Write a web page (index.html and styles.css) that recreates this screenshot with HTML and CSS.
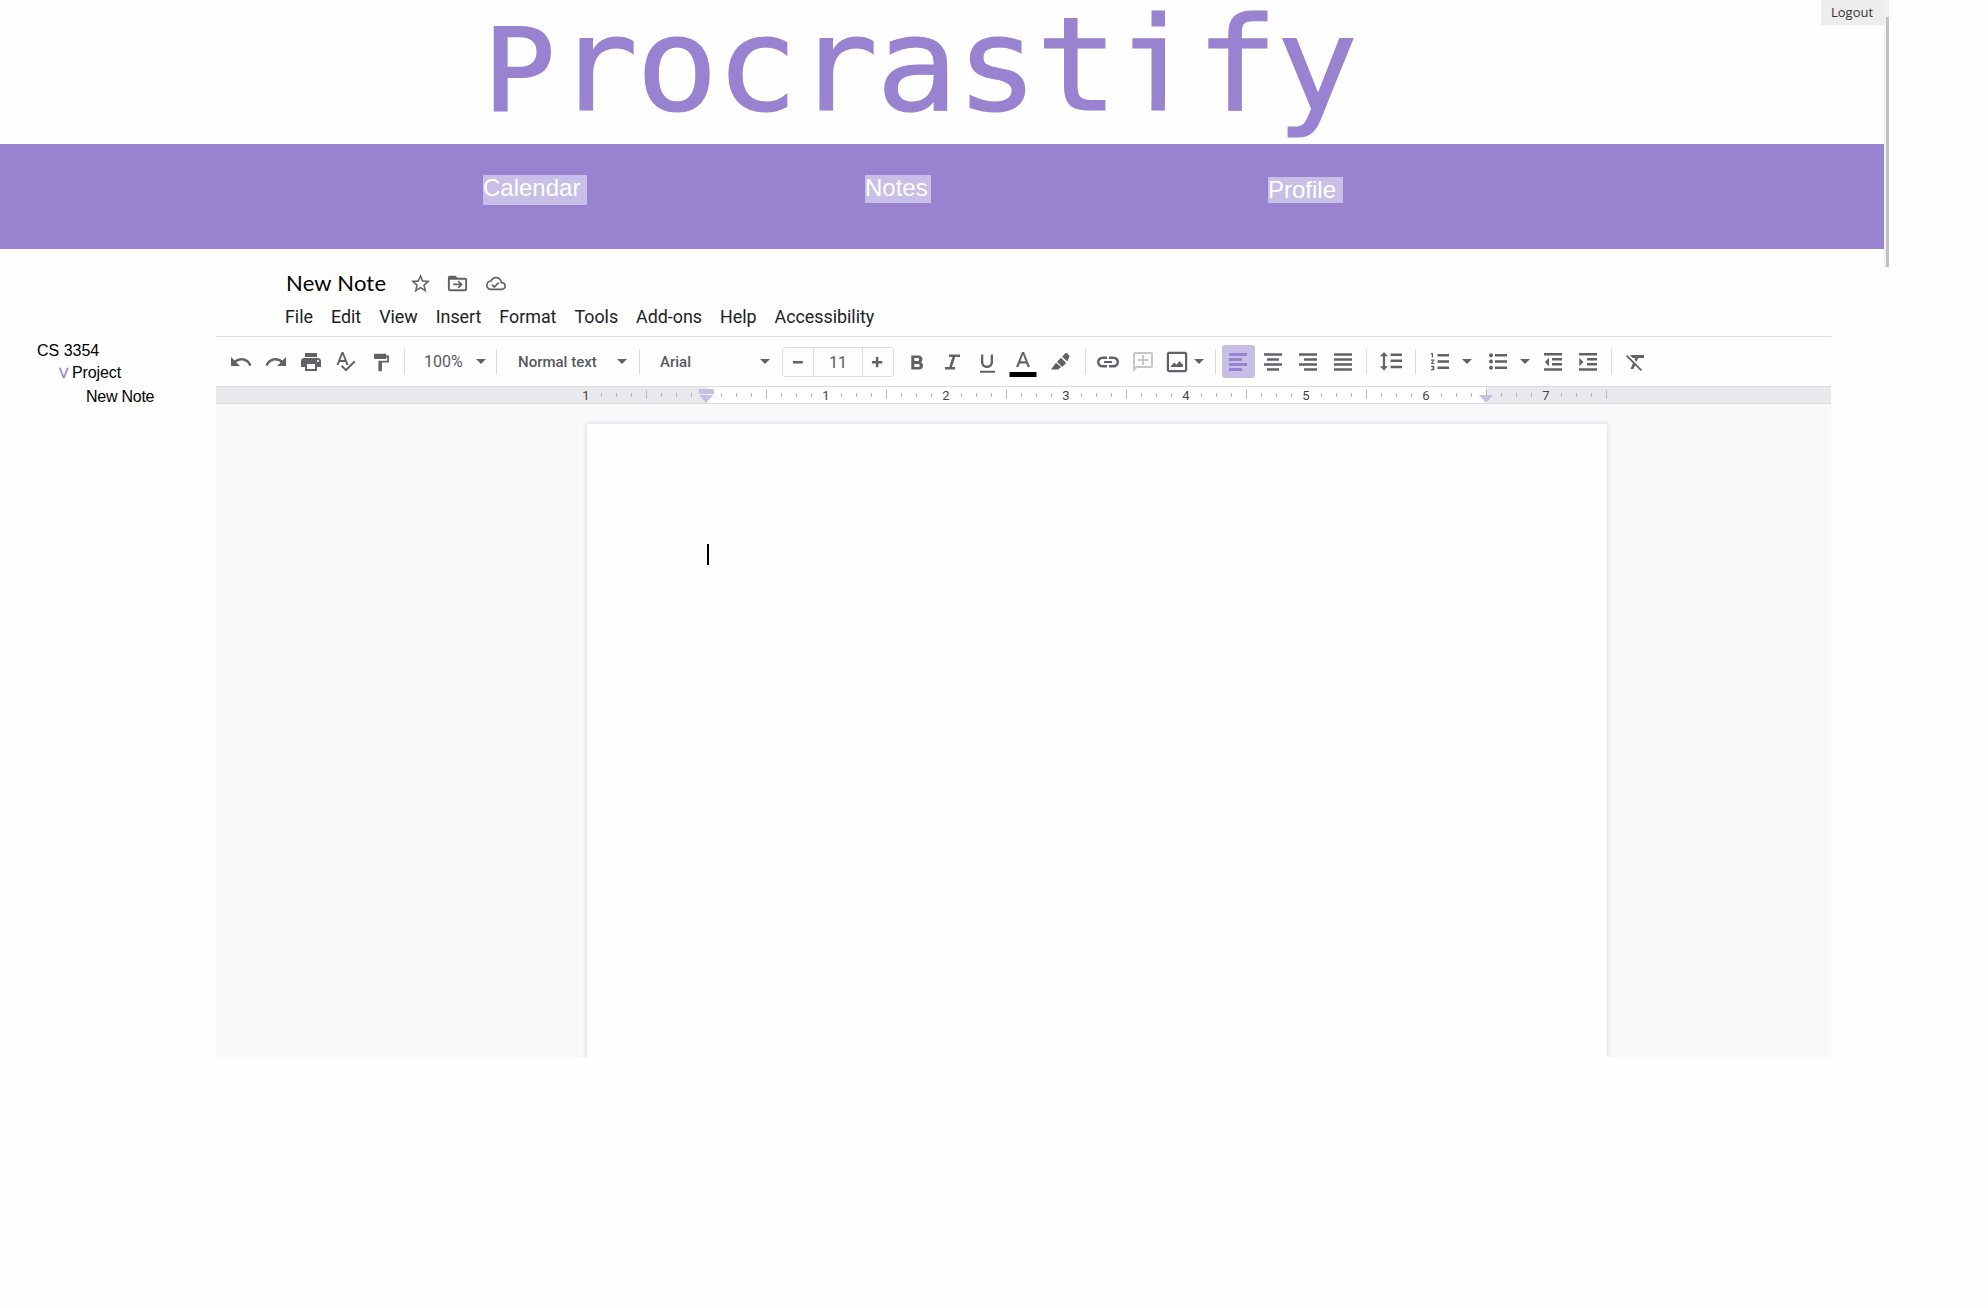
FILE: index.html
```html
<!DOCTYPE html>
<html lang="en">
<head>
<meta charset="utf-8">
<title>Procrastify</title>
<link rel="stylesheet" href="styles.css">
</head>
<body>
<header class="site">
  <h1 class="brand"><span class="cap">P</span>rocrast<span class="stem">i</span>fy</h1>
  <nav class="nav">
    <a class="cal">Calendar</a>
    <a class="notes">Notes</a>
    <a class="profile">Profile</a>
  </nav>
  <a class="logout">Logout</a>
  <div class="scroll"><div class="thumb"></div></div>
</header>
<main class="main">
  <aside class="tree">
    <div class="course">CS 3354</div>
    <div class="folder"><span class="chev">V</span>Project</div>
    <div class="leaf">New Note</div>
  </aside>
  <section class="editor">
    <div class="titlebar">
      <span class="doc">New Note</span>
      <svg class="ti star" viewBox="0 0 24 24"><path d="M22 9.24l-7.19-.62L12 2 9.19 8.63 2 9.24l5.46 4.73L5.82 21 12 17.27 18.18 21l-1.63-7.03L22 9.24zM12 15.4l-3.76 2.27 1-4.28-3.32-2.88 4.38-.38L12 6.1l1.71 4.04 4.38.38-3.32 2.88 1 4.28L12 15.4z"/></svg>
      <svg class="ti fold" viewBox="0 0 24 24"><path d="M20 6h-8l-2-2H4c-1.1 0-2 .9-2 2v12c0 1.1.9 2 2 2h16c1.1 0 2-.9 2-2V8c0-1.100-.9-2-2-2zm0 12H4V8h16v10zm-7.900-2.100l1.300 1.300L17.500 13l-4.100-4.200-1.300 1.300 2 2H7.500v1.800h6.600z"/></svg>
      <svg class="ti cloud" viewBox="0 0 24 24"><path d="M19.350 10.040C18.670 6.590 15.640 4 12 4 9.110 4 6.610 5.640 5.360 8.040 2.340 8.360 0 10.910 0 14c0 3.310 2.690 6 6 6h13c2.760 0 5-2.240 5-5 0-2.640-2.050-4.780-4.650-4.960zM19 18H6c-2.210 0-4-1.790-4-4s1.790-4 4-4h.71C7.370 7.690 9.480 6 12 6c3.040 0 5.500 2.460 5.500 5.500v.5H19c1.660 0 3 1.340 3 3s-1.340 3-3 3zm-9-3.180l-2.090-2.090L6.500 14.140 10 17.640l6.010-6.010-1.410-1.410z"/></svg>
    </div>
    <div class="menus"><span>File</span><span>Edit</span><span>View</span><span>Insert</span><span>Format</span><span>Tools</span><span>Add-ons</span><span>Help</span><span>Accessibility</span></div>
    <div class="toolbar">
      <div class="group g-history">
        <svg class="ic" viewBox="0 0 24 24"><path d="M12.500 8c-2.650 0-5.050.99-6.900 2.600L2 7v9h9l-3.620-3.620c1.390-1.160 3.160-1.880 5.120-1.880 3.540 0 6.550 2.310 7.600 5.500l2.370-.78C21.080 11.030 17.150 8 12.500 8z"/></svg>
        <svg class="ic" viewBox="0 0 24 24"><path d="M18.400 10.600C16.550 8.990 14.150 8 11.500 8c-4.650 0-8.580 3.030-9.960 7.220L3.900 16c1.050-3.190 4.050-5.500 7.600-5.500 1.950 0 3.730.72 5.120 1.880L13 16h9V7l-3.600 3.600z"/></svg>
        <svg class="ic" viewBox="0 0 24 24"><path d="M19 8H5c-1.660 0-3 1.340-3 3v6h4v4h12v-4h4v-6c0-1.660-1.340-3-3-3zm-3 11H8v-5h8v5zm3-7c-.55 0-1-.45-1-1s.45-1 1-1 1 .45 1 1-.45 1-1 1zm-1-9H6v4h12V3z"/></svg>
        <svg class="ic" viewBox="0 0 24 24"><path d="M12.450 16h2.090L9.430 3H7.570L2.460 16h2.090l1.120-3h5.640l1.140 3zm-6.020-5L8.500 5.480 10.570 11H6.430zm13.660.59l-8.090 8.090L8.330 16 6.920 17.410 12 22.500l9.500-9.500-1.410-1.410z" transform="translate(0 -1)"/></svg>
        <svg class="ic" viewBox="0 0 24 24"><path d="M18 4V3c0-.55-.45-1-1-1H5c-.55 0-1 .45-1 1v4c0 .55.45 1 1 1h12c.55 0 1-.45 1-1V6h1v4H9v11c0 .55.45 1 1 1h2c.55 0 1-.45 1-1v-9h8V4h-3z" transform="translate(1.500 2) scale(.88)"/></svg>
      </div>
      <i class="sep"></i>
      <div class="group g-zoom"><span class="lbl">100%</span><b class="caret"></b></div>
      <i class="sep"></i>
      <div class="group g-style"><span class="lbl med">Normal text</span><b class="caret"></b></div>
      <i class="sep"></i>
      <div class="group g-font"><span class="lbl med">Arial</span><b class="caret"></b></div>
      <div class="size"><svg viewBox="0 0 30 28"><path d="M10 13h10v2.500H10z"/></svg><span>11</span><svg viewBox="0 0 30 28"><path d="M9 13h4V9h2.500v4h4v2.400h-4v4H13v-4H9z"/></svg></div>
      <div class="group g-format">
        <svg class="ic" viewBox="0 0 24 24"><path d="M15.600 11.790c.97-.67 1.650-1.770 1.650-2.790 0-2.260-1.750-4-4-4H6v14h8.040c2.090 0 3.710-1.700 3.710-3.790 0-1.520-.86-2.820-2.150-3.420zM9 7.500h3.500c.83 0 1.500.67 1.500 1.500s-.67 1.500-1.500 1.500H9v-3zm4 9H9v-3h4c.83 0 1.500.67 1.500 1.500s-.67 1.500-1.500 1.500z" transform="translate(.3 .5)"/></svg>
        <svg class="ic" viewBox="0 0 24 24"><path d="M9 4.500v2.600h3.400L9.200 16.900H5v2.600h10v-2.600h-3L15.200 7.100H20V4.500z"/></svg>
        <svg class="ic" viewBox="0 0 24 24"><path d="M12 18c3.310 0 6-2.500 6-5.810V4.500h-2.300v7.800c0 1.800-1.600 3.400-3.700 3.400s-3.700-1.600-3.700-3.400V4.500H6v7.690C6 15.500 8.690 18 12 18zm-7 2.700V22.700h15v-2z"/></svg>
        <svg class="ic color" viewBox="0 0 28 28"><path d="M13 4L7 19h2.400l1.300-3.600h6.600l1.300 3.600H21L15 4zm-1.500 9.300L14 6.500l2.500 6.800z"/><path d="M.5 24h27v5H.5z" fill="#000"/></svg>
        <svg class="ic mark" viewBox="0 0 24 24"><path d="M2 19.500l5-6.700 5.200 4.200L9 19.500zM8 11.800l4-4 5.200 5.200-4 4zM13.200 6.700L16.200 3.300q.9-.7 1.800 0l2.200 2.200q.8.900 0 1.800l-2 4.200z"/></svg>
      </div>
      <i class="sep"></i>
      <div class="group g-insert">
        <svg class="ic" viewBox="0 0 24 24"><path d="M3.400 12c0-1.710 1.390-3.100 3.100-3.100H11V6.500H6.500a5.500 5.500 0 000 11H11v-2.400H6.500c-1.710 0-3.100-1.390-3.100-3.100zM8 13.100h8v-2.200H8v2.200zm9.500-6.600H13v2.400h4.500c1.710 0 3.100 1.390 3.100 3.100s-1.390 3.100-3.100 3.100H13v2.400h4.500a5.500 5.500 0 000-11z"/></svg>
        <svg class="ic pale" viewBox="0 0 24 24"><path d="M20 2H4c-1.100 0-2 .9-2 2v18l4-4h14c1.100 0 2-.9 2-2V4c0-1.100-.9-2-2-2zm0 14H5.200L4 17.200V4h16zM11 15h2v-4h4V9h-4V5h-2v4H7v2h4z"/></svg>
        <svg class="ic img" viewBox="0 0 24 24"><path d="M20 1.800H4c-1.200 0-2.200 1-2.200 2.200v16c0 1.200 1 2.200 2.200 2.200h16c1.200 0 2.200-1 2.200-2.200V4c0-1.200-1-2.200-2.200-2.200zM20 20H4V4h16zM6 17h12v-2l-3.500-4-3 3.700L9.300 12.500 6 16z"/></svg>
        <b class="caret"></b>
      </div>
      <i class="sep"></i>
      <div class="group g-align">
        <span class="on"><svg class="ic" viewBox="0 0 24 24"><path d="M3 3h18v3H3zm0 5h13v3H3zm0 5h18v3H3zm0 5h13v3H3z"/></svg></span>
        <svg class="ic" viewBox="0 0 24 24"><path d="M3 3.200h18v2.600H3zm3 5h12v2.600H6zm-3 5h18v2.600H3zm3 5h12v2.600H6z"/></svg>
        <svg class="ic" viewBox="0 0 24 24"><path d="M3 3.200h18v2.600H3zm5 5h13v2.600H8zm-5 5h18v2.600H3zm5 5h13v2.600H8z"/></svg>
        <svg class="ic" viewBox="0 0 24 24"><path d="M3 3.200h18v2.600H3zm0 5h18v2.600H3zm0 5h18v2.600H3zm0 5h18v2.600H3z"/></svg>
      </div>
      <i class="sep"></i>
      <div class="group g-line"><svg class="ic" viewBox="0 0 24 24"><path d="M5 2L.9 6.300H3.900v10H.9L5 20.500l4-4.200H6.100v-10H9zM11.500 3.500H23V6H11.500zm0 6H23V12H11.500zm0 6.300H23v2.500H11.500z"/></svg></div>
      <i class="sep"></i>
      <div class="group g-list">
        <svg class="ic" viewBox="0 0 24 24"><path d="M3 17h2v.5H4v1h1v.5H3v1.200h3.300v-4.500H3zm.8-9.500H5V3H3v1.200h.8zM3 10.700h1.800L3 13v1.100h3.300v-1.200H4.500l1.800-2.300V9.500H3zM9.500 4H21v2.600H9.500zm0 6.300H21v2.500H9.500zm0 6.200H21V19H9.500z"/></svg>
        <b class="caret"></b>
        <svg class="ic" viewBox="0 0 24 24"><circle cx="5" cy="5.300" r="2"/><circle cx="5" cy="11.500" r="2"/><circle cx="5" cy="17.800" r="2"/><path d="M9 4h12v2.600H9zm0 6.300h12v2.500H9zm0 6.200h12V19H9z"/></svg>
        <b class="caret"></b>
        <svg class="ic" viewBox="0 0 24 24"><path d="M3 3h18v2.500H3zm8 5h10v2.500H11zm0 5h10v2.500H11zm-8 5.200h18v2.500H3zM3.800 12L8 7.800v8.400z"/></svg>
        <svg class="ic" viewBox="0 0 24 24"><path d="M3 3h18v2.500H3zm8 5h10v2.500H11zm0 5h10v2.500H11zm-8 5.200h18v2.500H3zM3.300 7.800L7.500 12l-4.200 4.200z"/></svg>
      </div>
      <i class="sep"></i>
      <div class="group g-clear"><svg class="ic" viewBox="0 0 24 24"><path d="M3.270 5L2 6.270l6.970 6.970L6.500 19h3l1.570-3.660L16.730 21 18 19.730 3.550 5.270 3.270 5zM6 5v.18L8.820 8h2.400l-.72 1.680 2.100 2.100L14.210 8H20V5H6z"/></svg></div>
    </div>
    <svg class="ruler" width="1615" height="18" viewBox="216 386 1615 18">
      <defs><pattern id="ticks" x="586" y="386" width="120" height="18" patternUnits="userSpaceOnUse">
        <path d="M15 7h1v4h-1zM30 7h1v4h-1zM45 7h1v4h-1zM60 4h1v9h-1zM75 7h1v4h-1zM90 7h1v4h-1zM105 7h1v4h-1z" fill="#b6b8be"/>
      </pattern></defs>
      <rect x="216" y="386" width="1615" height="18" fill="#e8e9ed"/>
      <rect x="707" y="386" width="779" height="18" fill="#fff"/>
      <rect x="586" y="386" width="1021" height="18" fill="url(#ticks)"/>
      <path d="M216 386h1615v1H216zM216 403h1615v1H216z" fill="#dadce0"/>
      <path d="M699 389h15v5h-15zM699 395h14l-7 8zM1479 395h14l-7 8z" fill="#c8bfe7"/>
      <g class="nums"><text x="586" y="400">1</text><text x="826" y="400">1</text><text x="946" y="400">2</text><text x="1066" y="400">3</text><text x="1186" y="400">4</text><text x="1306" y="400">5</text><text x="1426" y="400">6</text><text x="1546" y="400">7</text></g>
    </svg>
    <div class="canvas"><div class="page"><div class="cursor"></div></div></div>
  </section>
</main>
</body>
</html>
```
FILE: styles.css
```css
* { box-sizing: border-box; }
body { margin: 0; background: #fefefe; font-family: "Liberation Sans", Arial, sans-serif; color: #000; }
.site { position: relative; height: 249px; width: 1889px; }
.brand { margin: 0 0 0 476px; width: 900px; height: 144px; font: 400 130px/130px "DejaVu Sans Mono", monospace; letter-spacing: -2.070px; color: #9982cf; white-space: nowrap; -webkit-text-stroke: 1.200px #9982cf; transform: scaleX(1.05); transform-origin: 0 0; }
.brand .cap { display: inline-block; width: 76.200px; padding-left: 7px; font-size: 114px; line-height: 1; letter-spacing: 0; -webkit-text-stroke: 2px #9982cf; }
/* trims the foot serif so only the stem reaches the baseline */
.brand .stem { display: inline-block; clip-path: polygon(0 -10px, 100% -10px, 100% 77%, 46.500px 77%, 46.500px 100%, 33.700px 100%, 33.700px 77%, 0 77%); }
.nav { display: flex; align-items: flex-start; height: 105px; width: 1884px; padding: 31px 0 0 483px; background: #9982cf; color: #fff; font-size: 24px; line-height: 26px; }
.nav a { background: #c8bfe7; }
.cal { width: 104px; height: 30px; }
.notes { width: 66px; height: 28px; margin-left: 278px; }
.profile { width: 75px; height: 26px; margin: 2px 0 0 337px; }
.logout { position: absolute; left: 1821px; top: 0; width: 63px; height: 25px; padding-left: 10px; background: #ededed; color: #333; font: 13px/25px "Open Sans", sans-serif; }
.scroll { position: absolute; left: 1884px; top: 0; width: 5px; height: 267px; padding: 17px 0 0 2px; background: #f1f1f1; }
.thumb { height: 250px; background: #c1c1c1; }
.main { display: flex; }
.tree { width: 216px; padding: 91px 0 0 37px; font-size: 16px; line-height: 22px; }
.folder { padding-left: 22px; letter-spacing: -.1px; }
.chev { display: inline-block; width: 13px; font-size: 14px; color: #9982cf; -webkit-text-stroke: .4px #9982cf; }
.leaf { padding-left: 49px; margin-top: 2px; letter-spacing: -.25px; }
.editor { width: 1615px; }
.titlebar { display: flex; height: 53px; padding: 19px 0 0 70px; }
.doc { width: 123px; font: 22px/30px Lato, sans-serif; letter-spacing: .2px; white-space: nowrap; }
.ti { width: 23px; height: 23px; margin-top: 4px; fill: #5f6368; }
.star { margin-left: 0; }
.fold { margin-left: 14px; }
.cloud { width: 20px; margin-left: 17px; }
.menus { display: flex; gap: 18px; height: 35px; padding-left: 69px; border-bottom: 1px solid #dadce0; font: 17.900px/30px Roboto, sans-serif; letter-spacing: -.03px; color: #202124; }
.toolbar { display: flex; align-items: center; height: 49px; padding-left: 7px; }
.group { display: flex; align-items: center; flex: none; }
.ic { width: 24px; height: 24px; margin: 0 5.500px; flex: none; fill: #5f6368; }
.sep { width: 1px; height: 25px; background: #dadce0; flex: none; }
.caret { border: 5px solid transparent; border-top-color: #5f6368; border-bottom: 0; }
.lbl { font: 16px/20px Roboto, sans-serif; color: #555a5f; white-space: nowrap; }
.med { font-weight: 500; font-size: 15px; }
.g-history { width: 181px; }
.g-zoom { width: 91px; padding-left: 19px; }
.g-zoom .lbl { width: 52px; }
.g-style { width: 142px; padding-left: 21px; }
.g-style .lbl { width: 99px; }
.g-font { width: 142px; padding-left: 20px; }
.g-font .lbl { width: 100px; }
.size { display: flex; width: 112px; height: 30px; border: 1px solid #dadce0; border-radius: 3px; flex: none; }
.size svg { width: 30px; height: 28px; fill: #5f6368; }
.size span { width: 51px; border: 1px solid #dadce0; border-width: 0 1px; text-align: center; font: 16px/29px Roboto, sans-serif; color: #555a5f; }
.g-format { width: 191px; padding-left: 5px; }
.color { width: 28px; height: 28px; margin: 0 3px 0 5px; overflow: visible; }
.mark { margin-left: 9px; }
.g-insert { width: 129px; padding-left: 4px; }
.g-insert .img { margin-left: 4.500px; }
.g-insert .caret { margin-left: 0; }
.pale { fill: #c6c6c6; }
.g-align { width: 150px; padding-left: 6px; }
.on { display: flex; align-items: center; height: 33px; width: 33px; margin-right: 0; background: #c8bfe7; border-radius: 3px; }
.on .ic { margin: 0 4px; fill: #9982cf; }
.g-line { width: 48px; padding-left: 6px; }
.g-list { width: 195px; padding-left: 6px; }
.g-list .caret { margin: 0 8px 0 5px; }
.g-list .caret + .ic + .caret + .ic { margin-left: 3px; }
.g-clear { padding-left: 6px; }
.ruler { display: block; }
.nums { font: 13px Roboto, sans-serif; fill: #444; text-anchor: middle; }
.canvas { height: 653px; padding: 20px 0 0 371px; background: #f8f9fb; overflow: hidden; }
.page { width: 1020px; height: 653px; padding: 120px 0 0 120px; background: #fefefe; box-shadow: 0 0 4px 1px rgba(60, 64, 67, .15); }
.cursor { width: 2px; height: 21px; background: #000; }
```
